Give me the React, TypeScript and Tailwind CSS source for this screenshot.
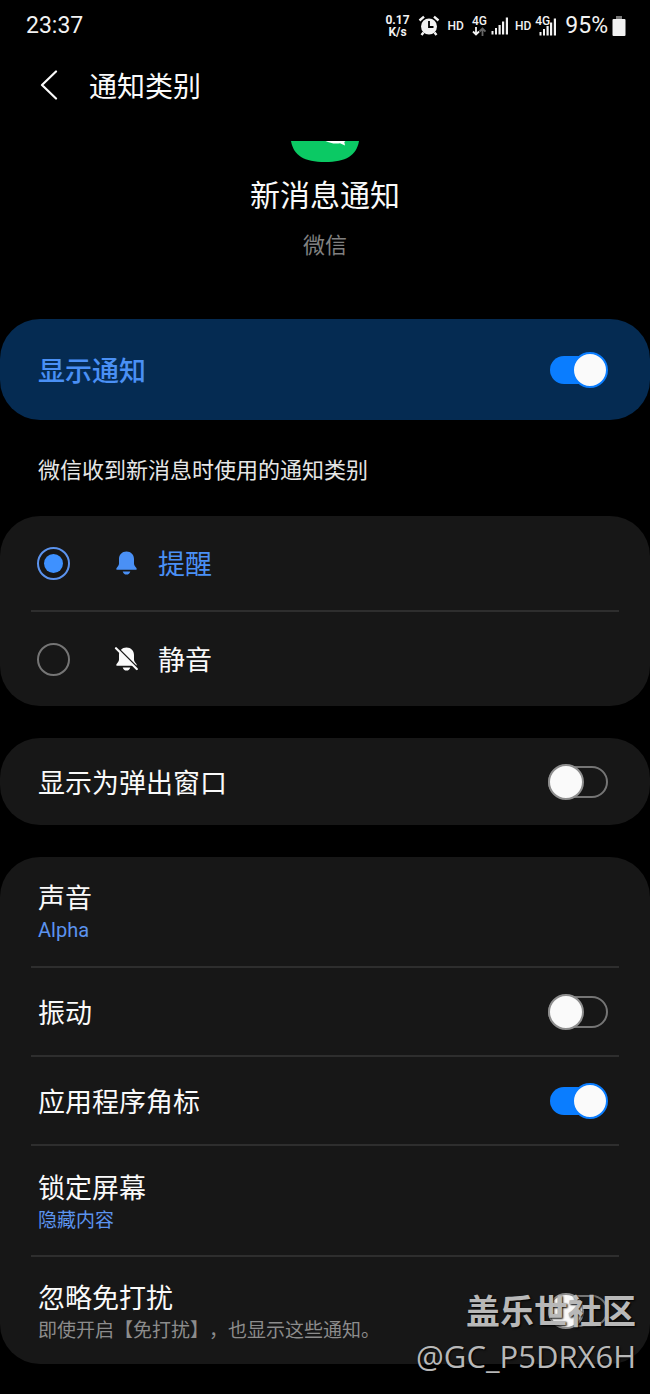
import { useState } from "react";
import type { ReactNode } from "react";

const Switch = ({ id, on }: { id: string; on?: boolean }) => {
  const [checked, setChecked] = useState(!!on);
  return (
    <span className="relative flex h-9 w-15 shrink-0 items-center">
      <input
        id={id}
        type="checkbox"
        role="switch"
        checked={checked}
        onChange={() => setChecked(!checked)}
        className="peer h-8 w-full cursor-pointer appearance-none rounded-full border-2 border-[#757575] checked:border-transparent checked:bg-[#0a7dff] checked:bg-clip-padding"
      />
      <span className="pointer-events-none absolute left-0 top-0 size-9 rounded-full border-2 border-[#8e8e8e] bg-[#fafafa] peer-checked:left-6 peer-checked:border-[#0a7dff]" />
    </span>
  );
};

const Card = ({ children }: { children: ReactNode }) => (
  <section className="divide-y-2 divide-[#2e2e2e] rounded-[40px] bg-[#171717] px-[31px]">{children}</section>
);

type RowProps = {
  title: string;
  note?: ReactNode;
};

const RowText = ({ title, note }: RowProps) => (
  <>
    <span className="block text-[27px] leading-9 text-[#fafafa]">{title}</span>
    {note && <span className="block text-[19px] leading-7 text-[#5b93ee] [text-spacing-trim:space-all]">{note}</span>}
  </>
);

const LinkRow = ({ title, note }: RowProps) => (
  <div className="box-content flex min-h-[109px]">
    <button type="button" className="flex flex-1 flex-col justify-center px-[7px] text-left">
      <RowText title={title} note={note} />
    </button>
  </div>
);

const SwitchRow = ({ id, title, note, on }: RowProps & { id: string; on?: boolean }) => (
  <div className={`box-content flex items-center justify-between ${note ? "min-h-[107px]" : "min-h-[87px]"}`}>
    <label htmlFor={id} className="pl-[7px]">
      <RowText title={title} note={note} />
    </label>
    <span className="pr-[11px]">
      <Switch id={id} on={on} />
    </span>
  </div>
);

const Bell = ({ off }: { off?: boolean }) => (
  <svg viewBox="0 0 24 26" className="h-[26px] w-6" fill="currentColor" aria-hidden="true">
    <path d="M12.500 1.500C8 1.500 5 4.700 5 9v4.400c0 1.600-.8 2.700-2 4-.5.6-.7 1-.7 1.500 0 .6.4.9 1 .9h18.400c.6 0 1-.3 1-.9 0-.5-.2-.9-.7-1.500-1.200-1.300-2-2.400-2-4V9c0-4.300-3-7.500-7.500-7.500z" />
    <path d="M8.700 21.400h7.600c-.5 2-1.900 3.200-3.800 3.200s-3.300-1.200-3.800-3.200z" />
    {off && (
      <>
        <path d="M1.500-.1 25 23.400" stroke="#171717" strokeWidth="2" />
        <path d="M2 2.200 22.800 23" stroke="currentColor" strokeWidth="2.2" strokeLinecap="round" />
      </>
    )}
  </svg>
);

const Choice = ({ label, off, checked, onSelect }: { label: string; off?: boolean; checked: boolean; onSelect: () => void }) => (
  <label className="box-content flex min-h-[94px] cursor-pointer items-center pl-[6px]">
    <input
      type="radio"
      name="alert"
      checked={checked}
      onChange={onSelect}
      className="size-[33px] shrink-0 appearance-none rounded-full border-2 border-[#757575] bg-clip-content p-[5px] checked:border-[#5b93ee] checked:bg-[#3e91ff]"
    />
    <span className={`ml-11 flex items-center gap-5 text-[27px] leading-9 ${checked ? "text-[#4a90f5]" : "text-[#fafafa]"}`}>
      <Bell off={off} />
      {label}
    </span>
  </label>
);

const Bars = () => (
  <svg viewBox="0 0 18 18" className="h-[18px] w-[18px]" fill="#f2f2f2" aria-hidden="true">
    <rect x="0.5" y="14" width="2" height="3.5" />
    <rect x="4" y="11" width="2" height="6.5" />
    <rect x="7.5" y="8" width="2.2" height="9.5" />
    <rect x="11" y="4.5" width="2.2" height="13" />
    <rect x="14.8" y="0.5" width="2.2" height="17" />
  </svg>
);

const StatusBar = () => (
  <div className="flex h-[52px] items-center justify-between pl-[26px] pr-6 font-['Roboto',sans-serif] text-[23px] text-[#f2f2f2]">
    <span>23:37</span>
    <div className="flex items-center">
      <span className="flex flex-col items-center text-xs font-bold leading-3">
        <span>0.17</span>
        <span>K/s</span>
      </span>
      <svg viewBox="0 0 22 22" className="ml-2 size-[22px]" fill="none" stroke="#f2f2f2" aria-hidden="true">
        <circle cx="11" cy="11.5" r="8" fill="#f2f2f2" stroke="none" />
        <path d="M1.5 5.5 6 1.6M20.5 5.5 16 1.6" strokeWidth="2.4" />
        <path d="m5.5 17.5-2 2.5M16.5 17.5l2 2.5" strokeWidth="2.4" />
        <path d="M11 6v6h4.5" stroke="#000" strokeWidth="1.8" />
      </svg>
      <span className="ml-2 text-xs font-medium leading-4">HD</span>
      <span className="ml-2 flex flex-col items-center">
        <span className="text-xs font-medium leading-[11px]">4G</span>
        <svg viewBox="0 0 14 9" className="h-[9px] w-[14px]" fill="none" strokeWidth="1.8" aria-hidden="true">
          <path d="M4 0v7.5M1 4.5l3 3 3-3" stroke="#f2f2f2" />
          <path d="M10.5 9V1.5M7.5 4.5l3-3 3 3" stroke="#666" />
        </svg>
      </span>
      <span className="ml-1">
        <Bars />
      </span>
      <span className="ml-[6px] text-xs font-medium leading-4">HD</span>
      <span className="relative ml-1 flex h-5 w-[22px] items-start">
        <span className="text-xs font-medium leading-[11px]">4G</span>
        <span className="absolute bottom-0 right-0">
          <Bars />
        </span>
      </span>
      <span className="ml-2">95%</span>
      <svg viewBox="0 0 14 20" className="ml-1 h-5 w-[14px]" aria-hidden="true">
        <rect x="4" width="6" height="3" fill="#777" />
        <rect x="0.5" y="3" width="13" height="17" rx="1" fill="#f2f2f2" />
      </svg>
    </div>
  </div>
);

const App = () => {
  const [alert, setAlert] = useState(true);

  return (
    <main className="relative min-h-screen bg-black pb-[30px] font-['Noto_Sans_CJK_SC',sans-serif] text-[#fafafa]">
      <StatusBar />

      <header className="flex h-[66px] items-center pl-10">
        <button type="button" aria-label="返回">
          <svg viewBox="0 0 18 30" className="h-[30px] w-[18px]" fill="none" stroke="#fafafa" strokeWidth="2.2" strokeLinecap="round" strokeLinejoin="round" aria-hidden="true">
            <path d="M16 1.5 2 15l14 13.5" />
          </svg>
        </button>
        <h1 className="ml-[31px] text-[28px] leading-10">通知类别</h1>
      </header>

      <div className="flex flex-col items-center pt-[23px] text-center">
        {/* lower edge of the app icon, the rest is scrolled under the header */}
        <svg viewBox="0 0 70 22" className="h-[22px] w-[70px]" aria-hidden="true">
          <path d="M1 0h68c-2.5 14.5-13 21-34 21S3.5 14.5 1 0z" fill="#0bc964" />
          <path d="M35.5 0c4 2 9 3.1 14.5 2.300L55 4.500 54.300 1 55.500 0z" fill="#fff" />
        </svg>
        <h2 className="mt-2 text-3xl leading-[44px]">新消息通知</h2>
        <p className="mt-3 text-[22px] leading-8 text-[#808080]">微信</p>
      </div>

      <section className="mt-15 flex min-h-[101px] items-center justify-between rounded-[40px] bg-[#052b52] pl-[38px] pr-[42px]">
        <label htmlFor="show" className="text-[27px] font-medium leading-9 text-[#4a90f5]">显示通知</label>
        <Switch id="show" on />
      </section>

      <p className="px-[38px] py-8 text-[22px] leading-8 text-[#e6e6e6]">微信收到新消息时使用的通知类别</p>

      <div className="flex flex-col gap-8">
        <Card>
          <Choice label="提醒" checked={alert} onSelect={() => setAlert(true)} />
          <Choice label="静音" off checked={!alert} onSelect={() => setAlert(false)} />
        </Card>
        <Card>
          <SwitchRow id="popup" title="显示为弹出窗口" />
        </Card>
        <Card>
          <LinkRow title="声音" note={<span className="font-['Roboto',sans-serif] text-xl leading-7">Alpha</span>} />
          <SwitchRow id="vibrate" title="振动" />
          <SwitchRow id="badge" title="应用程序角标" on />
          <LinkRow title="锁定屏幕" note="隐藏内容" />
          <SwitchRow
            id="dnd"
            title="忽略免打扰"
            note={<span className="text-[#8c8c8c]">即使开启【免打扰】，也显示这些通知。</span>}
          />
        </Card>
      </div>

      <div className="pointer-events-none absolute bottom-4 right-[14px] text-right text-[#b8b8b8] [text-shadow:1px_1px_2px_#000]">
        <p className="text-[34px] font-bold leading-[48px]">盖乐世社区</p>
        <p className="font-['Open_Sans',sans-serif] text-[31px] leading-[44px]">@GC_P5DRX6H</p>
      </div>
    </main>
  );
};

export default App;
